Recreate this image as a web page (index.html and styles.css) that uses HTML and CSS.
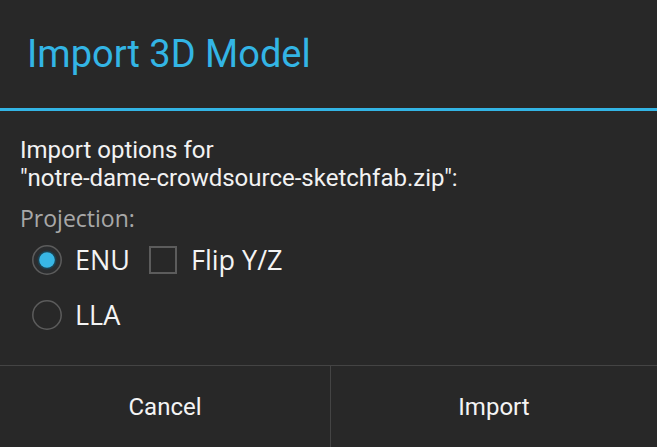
FILE: index.html
```html
<!DOCTYPE html>
<html>
<head>
<meta charset="utf-8">
<link rel="stylesheet" href="styles.css">
</head>
<body>
<div class="dialog">
  <div class="header"><h1 class="title">Import 3D Model</h1></div>
  <div class="rule"></div>
  <div class="content">
    <p class="msg">Import options for<br>"notre-dame-crowdsource-sketchfab.zip":</p>
    <div class="label">Projection:</div>
    <div class="row">
      <svg class="radio" width="32" height="32" viewBox="0 0 32 32">
        <circle cx="16" cy="16" r="14.2" fill="#2b2d2f" stroke="#5c5c5c" stroke-width="1.5"/>
        <circle cx="16" cy="16" r="9.5" fill="#1c4150"/>
        <circle cx="16" cy="16" r="7.8" fill="#38b7e6"/>
      </svg>
      <span class="opt">ENU</span>
      <span class="check"></span>
      <span class="opt">Flip Y/Z</span>
    </div>
    <div class="row">
      <svg class="radio" width="32" height="32" viewBox="0 0 32 32">
        <circle cx="16" cy="16" r="14.2" fill="none" stroke="#5c5c5c" stroke-width="1.5"/>
      </svg>
      <span class="opt">LLA</span>
    </div>
  </div>
  <div class="buttons">
    <div class="btn btn-left">Cancel</div>
    <div class="btn">Import</div>
  </div>
</div>
</body>
</html>
```
FILE: styles.css
```css
html, body {
  margin: 0;
  padding: 0;
  background: #282828;
}
.dialog {
  height: 447px;
  display: flex;
  flex-direction: column;
  font-family: Roboto, "Liberation Sans", sans-serif;
  color: #f2f2f2;
}
.header {
  height: 108px;
  box-sizing: border-box;
  padding: 32px 0 0 27px;
}
.title {
  margin: 0;
  font-family: Roboto, sans-serif;
  font-weight: 400;
  font-size: 38px;
  line-height: 44px;
  color: #33b5e5;
}
.rule {
  height: 3px;
  background: #33b5e5;
}
.content {
  flex: 1;
  padding: 25px 0 0 20px;
}
.msg {
  margin: 0;
  font-size: 24px;
  line-height: 28px;
}
.label {
  margin-top: 12px;
  font-family: "Open Sans", sans-serif;
  font-size: 23px;
  line-height: 28px;
  color: #a8a8a8;
}
.row {
  height: 55px;
  display: flex;
  align-items: center;
  padding-left: 11px;
  font-family: "Open Sans", sans-serif;
  font-size: 27px;
}
.row:first-of-type { margin-top: 2px; }
.radio {
  flex: none;
  margin-right: 12px;
}
.opt {
  color: #f4f4f4;
}
.check {
  width: 28px;
  height: 28px;
  box-sizing: border-box;
  border: 2px solid #5c5c5c;
  margin: 0 14px 0 19px;
}
.buttons {
  height: 81px;
  display: flex;
  border-top: 1px solid #444;
}
.btn {
  flex: 1;
  display: flex;
  align-items: center;
  justify-content: center;
  font-size: 24px;
  color: #f4f4f4;
}
.btn-left {
  flex: none;
  width: 330px;
  border-right: 1px solid #444;
}
```
